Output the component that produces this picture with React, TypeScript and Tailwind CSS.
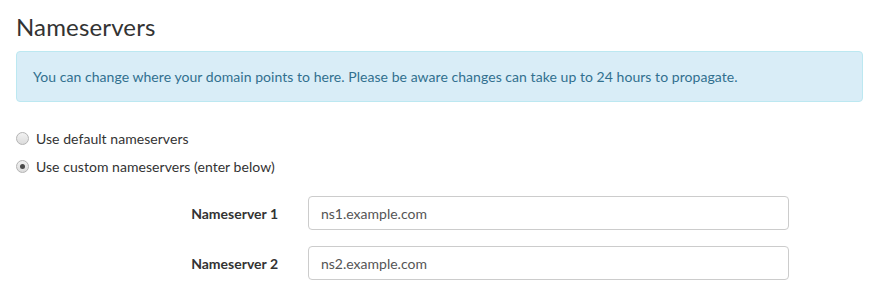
import { useState } from "react";

const font = { fontFamily: "Lato, 'Open Sans', sans-serif" };

// little grey radio like the old browser-default one
function Radio({ checked, onClick, label }: { checked: boolean; onClick: () => void; label: string }): React.JSX.Element {
  return (
    <div className="flex items-center gap-[7px] h-[20px] cursor-pointer" onClick={onClick}>
      <span className="w-[13px] h-[13px] rounded-full border border-[#b4b4b4] bg-gradient-to-b from-[#f2f2f2] to-[#dcdcdc] flex items-center justify-center">
        {checked && <span className="w-[5px] h-[5px] rounded-full bg-[#4a4a4a]" />}
      </span>
      {label}
    </div>
  );
}

export default function App(): React.JSX.Element {
  // which nameserver option is picked
  const [mode, setMode] = useState<"default" | "custom">("custom");

  return (
    <div className="w-[875px] h-[290px] bg-white text-[#333] px-4" style={font}>
      <h2 className="pt-[12px] text-[24px] leading-[30px] tracking-[0.15px] text-[#333]">Nameservers</h2>

      <div className="mt-[9px] w-[847px] h-[51px] flex items-center px-4 rounded border border-[#bce8f1] bg-[#d9edf7] text-[#31708f] text-[14px] tracking-[0.05px]">
        You can change where your domain points to here. Please be aware changes can take up to 24 hours to propagate.
      </div>

      <div className="mt-[26px] flex flex-col gap-[8px] text-[14px] tracking-[0.05px]">
        <Radio checked={mode === "default"} onClick={() => setMode("default")} label="Use default nameservers" />
        <Radio checked={mode === "custom"} onClick={() => setMode("custom")} label="Use custom nameservers (enter below)" />
      </div>

      <div className="mt-[20px] flex flex-col gap-[16px] text-[14px]">
        {["ns1.example.com", "ns2.example.com"].map((v, i) => (
          <div key={v} className="flex items-center">
            <span className="w-[262px] text-right font-bold">Nameserver {i + 1}</span>
            <input
              defaultValue={v}
              className="ml-[30px] w-[481px] h-[34px] px-3 rounded border border-[#ccc] text-[#555] outline-none"
              style={font}
            />
          </div>
        ))}
      </div>
    </div>
  );
}
